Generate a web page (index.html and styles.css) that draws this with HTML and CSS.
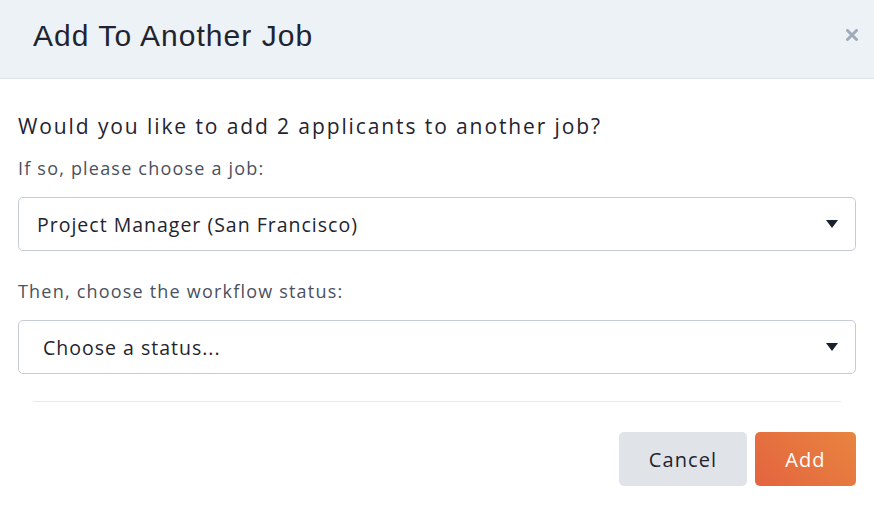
FILE: index.html
```html
<!DOCTYPE html>
<html>
<head>
<meta charset="utf-8">
<link rel="stylesheet" href="styles.css">
</head>
<body>
<div class="modal">
  <div class="header">
    <h1 class="title">Add To Another Job</h1>
    <svg class="close" width="12" height="12" viewBox="0 0 12 12"><path d="M1.5 1.5L10.5 10.5M10.5 1.5L1.5 10.5" stroke="#a0aabb" stroke-width="3" stroke-linecap="round"/></svg>
  </div>
  <div class="body">
    <p class="question">Would you like to add 2 applicants to another job?</p>
    <label class="label">If so, please choose a job:</label>
    <div class="select">
      <span class="value">Project Manager (San Francisco)</span>
      <svg class="caret" width="12" height="8" viewBox="0 0 12 8"><path d="M0 0H12L6 8Z" fill="#1a202c"/></svg>
    </div>
    <label class="label label2">Then, choose the workflow status:</label>
    <div class="select">
      <span class="value value2">Choose a status...</span>
      <svg class="caret" width="12" height="8" viewBox="0 0 12 8"><path d="M0 0H12L6 8Z" fill="#1a202c"/></svg>
    </div>
  </div>
  <div class="sep"></div>
  <div class="footer">
    <button class="btn cancel">Cancel</button>
    <button class="btn add">Add</button>
  </div>
</div>
</body>
</html>
```
FILE: styles.css
```css
* { box-sizing: border-box; }
html, body { margin: 0; padding: 0; background: #fff; }
body { font-family: "Open Sans", "Noto Sans", sans-serif; color: #1f2430; width: 874px; height: 508px; overflow: hidden; }
.header {
  height: 79px;
  background: #edf2f7;
  border-bottom: 1px solid #dfe3e8;
  display: flex;
  align-items: center;
  justify-content: space-between;
  padding: 0 16px 6px 33px;
}
.title {
  margin: 0;
  font-family: "Liberation Sans", "Roboto", sans-serif;
  font-weight: 400;
  font-size: 30px;
  color: #1f2430;
  letter-spacing: 1.05px;
}
.close { display: block; margin-bottom: 3px; }
.body { padding: 0 18px; }
.question {
  margin: 34px 0 0;
  font-size: 21px;
  line-height: 26px;
  color: #1f2430;
  letter-spacing: 1.9px;
}
.label {
  display: block;
  margin-top: 17px;
  font-size: 18px;
  line-height: 24px;
  color: #4a5160;
  letter-spacing: 1.2px;
}
.label2 { margin-top: 28px; }
.select {
  margin-top: 17px;
  height: 54px;
  border: 1px solid #c6ccd5;
  border-radius: 5px;
  display: flex;
  align-items: center;
  justify-content: space-between;
  padding: 0 17px 0 18px;
}
.value { font-size: 19.5px; color: #1f2430; letter-spacing: 1px; }
.value2 { margin-left: 6px; }
.caret { display: block; }
.sep {
  margin: 27px 33px 0;
  border-top: 1px solid #e6e8eb;
}
.footer {
  display: flex;
  justify-content: flex-end;
  gap: 8px;
  padding: 30px 18px 0;
}
.btn {
  height: 54px;
  border: none;
  border-radius: 5px;
  font-family: "Open Sans", "Noto Sans", sans-serif;
  font-size: 20px;
  letter-spacing: 1.1px;
}
.cancel { width: 128px; background: #e0e3e8; color: #1f2430; }
.add { width: 101px; color: #fff; background: linear-gradient(45deg, #e4643f, #e8843f); }
```
